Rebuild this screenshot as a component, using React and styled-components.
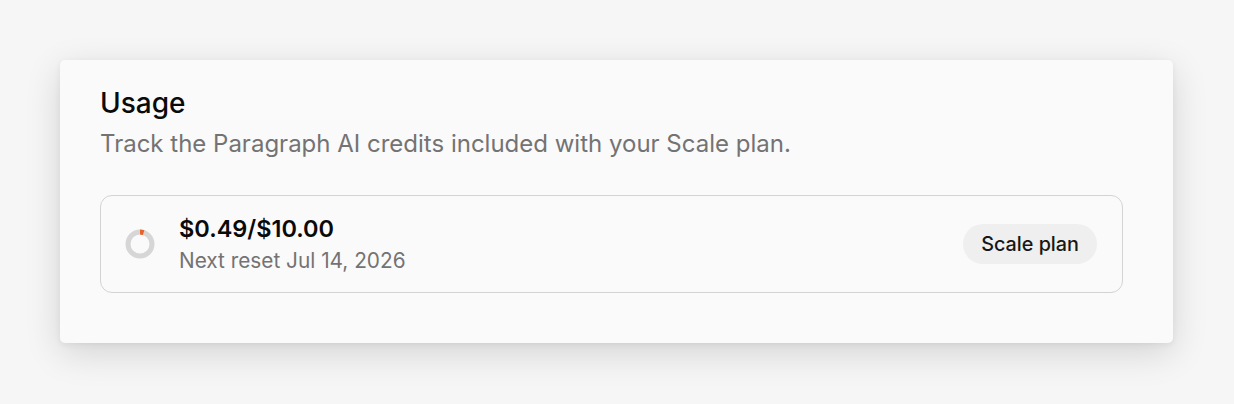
import React from 'react';
import styled, { createGlobalStyle } from 'styled-components';

const GlobalStyle = createGlobalStyle`
  html, body {
    margin: 0;
    padding: 0;
    background: #f6f6f6;
  }
  body {
    font-family: Inter, "Noto Sans", sans-serif;
    -webkit-font-smoothing: antialiased;
  }
`;

const Page = styled.div`
  padding: 60px 61px 60px 60px;
`;

const Card = styled.section`
  background: #fafafa;
  border-radius: 5px;
  padding: 26px 50px 50px 40px;
  box-shadow: 0 10px 36px rgba(0, 0, 0, 0.14), 0 2px 6px rgba(0, 0, 0, 0.06);
`;

const Title = styled.h2`
  margin: 0;
  font-size: 28px;
  line-height: 34px;
  font-weight: 500;
  color: #0a0a0a;
`;

const Subtitle = styled.p`
  margin: 8px 0 0;
  font-size: 24px;
  line-height: 32px;
  color: #737373;
`;

const UsageBox = styled.div`
  margin-top: 35px;
  height: 98px;
  box-sizing: border-box;
  border: 1.5px solid #d3d3d3;
  border-radius: 12px;
  padding: 0 24px 0 24px;
  display: flex;
  align-items: center;
  gap: 24px;
`;

const Info = styled.div`
  flex: 1;
  display: flex;
  flex-direction: column;
  gap: 3px;
`;

const Amount = styled.div`
  font-size: 23.5px;
  line-height: 30px;
  font-weight: 600;
  color: #0a0a0a;
`;

const Reset = styled.div`
  font-size: 20.8px;
  line-height: 28px;
  color: #737373;
`;

const Badge = styled.span`
  display: inline-flex;
  align-items: center;
  height: 40px;
  padding: 0 18px;
  border-radius: 20px;
  background: #efefef;
  font-size: 19.8px;
  font-weight: 500;
  color: #171717;
  margin-right: 1px;
`;

const Ring = ({ used, total }) => {
  const r = 12;
  const c = 2 * Math.PI * r;
  const frac = used / total;
  return (
    <svg width="30" height="30" viewBox="0 0 30 30">
      <circle cx="15" cy="15" r={r} fill="none" stroke="#d6d6d6" strokeWidth="5" />
      <circle
        cx="15"
        cy="15"
        r={r}
        fill="none"
        stroke="#e8622c"
        strokeWidth="5"
        strokeDasharray={`${c * frac} ${c}`}
        transform="rotate(-90 15 15)"
      />
    </svg>
  );
};

export default function App() {
  return (
    <Page>
      <GlobalStyle />
      <Card>
        <Title>Usage</Title>
        <Subtitle>Track the Paragraph AI credits included with your Scale plan.</Subtitle>
        <UsageBox>
          <Ring used={0.49} total={10} />
          <Info>
            <Amount>$0.49/$10.00</Amount>
            <Reset>Next reset Jul 14, 2026</Reset>
          </Info>
          <Badge>Scale plan</Badge>
        </UsageBox>
      </Card>
    </Page>
  );
}
